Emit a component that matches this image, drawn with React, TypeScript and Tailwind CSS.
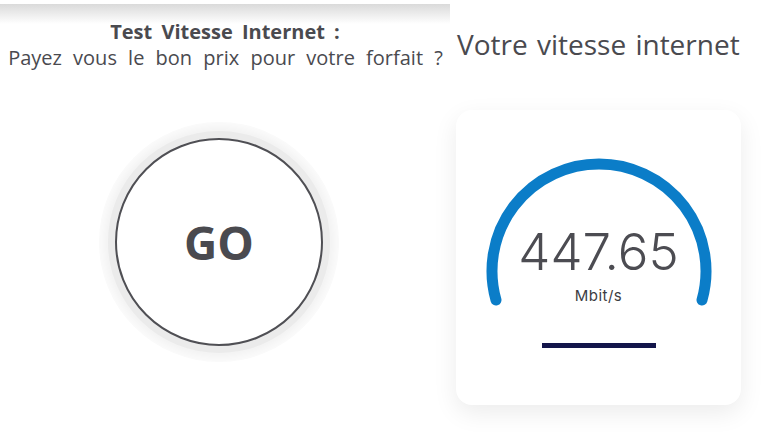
import React from 'react';

const textFont = { fontFamily: '"Open Sans", Lato, sans-serif' };

function GoButton() {
  return (
    <div className="flex items-center justify-center w-[240px] h-[240px] rounded-full bg-[#fafafa]">
      <div className="flex items-center justify-center w-[222px] h-[222px] rounded-full bg-[#ebebeb] shadow-[0_0_6px_4px_rgba(0,0,0,0.03)]">
        <button
          type="button"
          className="flex items-center justify-center w-[208px] h-[208px] rounded-full bg-white border-2 border-[#4f4f54] text-[46px] font-bold text-[#4a4a4f]"
          style={{ fontFamily: '"Open Sans", sans-serif' }}
        >
          GO
        </button>
      </div>
    </div>
  );
}

function Gauge() {
  return (
    <div className="relative w-[230px] h-[160px]">
      <svg width="230" height="160" viewBox="0 0 230 160" className="absolute left-0 top-0">
        <path d="M 12 150 A 107 107 0 1 1 218 150" fill="none" stroke="#0b7dc8" strokeWidth="11" strokeLinecap="round" />
      </svg>
      <div className="absolute left-0 right-0 top-[70px] text-center text-[51px] leading-[64px] font-light text-[#4c4c52]" style={{ fontFamily: 'Inter, sans-serif' }}>
        447.65
      </div>
      <div className="absolute left-0 right-0 top-[136px] text-center text-[15px] leading-[20px] tracking-[0.5px] text-[#3c3c42]" style={{ fontFamily: 'Inter, sans-serif' }}>
        Mbit/s
      </div>
    </div>
  );
}

export default function App() {
  return (
    <div className="flex w-[768px] h-[432px] bg-white overflow-hidden" style={textFont}>
      <div className="flex flex-col w-[450px]">
        <div className="mt-[4px] h-[20px] bg-gradient-to-b from-[#dadada] to-white"></div>
        <div className="text-center text-[#4a4a4f] -mt-[5px]">
          <div className="text-[20px] leading-[25px] font-bold [word-spacing:4px]">Test Vitesse Internet :</div>
          <div className="text-[20px] leading-[28px] [word-spacing:6px] pl-[1px] whitespace-nowrap">Payez vous le bon prix pour votre forfait ?</div>
        </div>
        <div className="flex justify-center pt-[50px] pr-[12px]">
          <GoButton />
        </div>
      </div>
      <div className="flex flex-col flex-1 pl-[6px] pr-[20px]">
        <h1 className="mt-[26px] text-[28px] leading-[36px] text-[#4a4a4f] [word-spacing:2px] pl-[1px] whitespace-nowrap">Votre vitesse internet</h1>
        <div className="mt-[48px] mr-[7px] h-[295px] rounded-[16px] bg-white shadow-[0_8px_24px_rgba(0,0,0,0.08)] flex flex-col items-center pt-[40px]">
          <Gauge />
          <div className="mt-[33px] w-[114px] h-[5px] bg-[#13154a]"></div>
        </div>
      </div>
    </div>
  );
}
